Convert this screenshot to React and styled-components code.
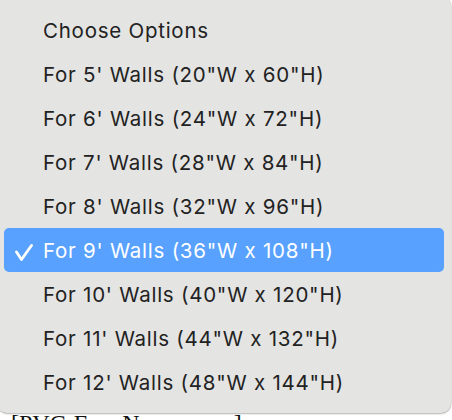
import React from 'react';
import styled, { createGlobalStyle } from 'styled-components';

const options = [
  'Choose Options',
  `For 5' Walls (20"W x 60"H)`,
  `For 6' Walls (24"W x 72"H)`,
  `For 7' Walls (28"W x 84"H)`,
  `For 8' Walls (32"W x 96"H)`,
  `For 9' Walls (36"W x 108"H)`,
  `For 10' Walls (40"W x 120"H)`,
  `For 11' Walls (44"W x 132"H)`,
  `For 12' Walls (48"W x 144"H)`,
];

const selected = 5;

const GlobalStyle = createGlobalStyle`
  html, body {
    margin: 0;
    background: #ffffff;
    overflow: hidden;
  }
`;

const Page = styled.div`
  position: relative;
  width: 452px;
  height: 420px;
  overflow: hidden;
`;

const SelectLabel = styled.div`
  padding-top: 409px;
  padding-left: 11px;
  font-family: "Liberation Serif", serif;
  font-size: 24px;
  line-height: 28px;
  color: #111;
  white-space: nowrap;
`;

const Menu = styled.ul`
  position: absolute;
  left: -3px;
  top: -4px;
  width: 454px;
  margin: 0;
  padding: 12px 0 9px;
  list-style: none;
  box-sizing: border-box;
  background: #e4e4e3;
  border-radius: 10px;
  box-shadow: 0 1px 2px rgba(0, 0, 0, 0.25), 0 0 0 0.5px rgba(0, 0, 0, 0.12);
  font-family: Inter, "Noto Sans", sans-serif;
  font-size: 20.5px;
  letter-spacing: 0.75px;
`;

const Item = styled.li`
  position: relative;
  display: flex;
  align-items: center;
  height: 44px;
  margin: 0 7px;
  padding-left: 39px;
  border-radius: 5px;
  color: ${({ active }) => (active ? '#ffffff' : '#222222')};
  background: ${({ active }) => (active ? '#58a1fe' : 'transparent')};
`;

const Check = styled.svg`
  position: absolute;
  left: 11px;
  top: 13px;
  width: 19px;
  height: 22px;
`;

const App = () => (
  <Page>
    <GlobalStyle />
    <SelectLabel>[PVC-Free Nonwoven ]</SelectLabel>
    <Menu>
      {options.map((text, i) => (
        <Item key={i} active={i === selected}>
          {i === selected && (
            <Check viewBox="0 0 19 22">
              <path d="M1.5 11 L6.5 18.5 L16.5 4.5" fill="none" stroke="#fff" strokeWidth="2.8" strokeLinecap="round" strokeLinejoin="round" />
            </Check>
          )}
          {text}
        </Item>
      ))}
    </Menu>
  </Page>
);

export default App;
